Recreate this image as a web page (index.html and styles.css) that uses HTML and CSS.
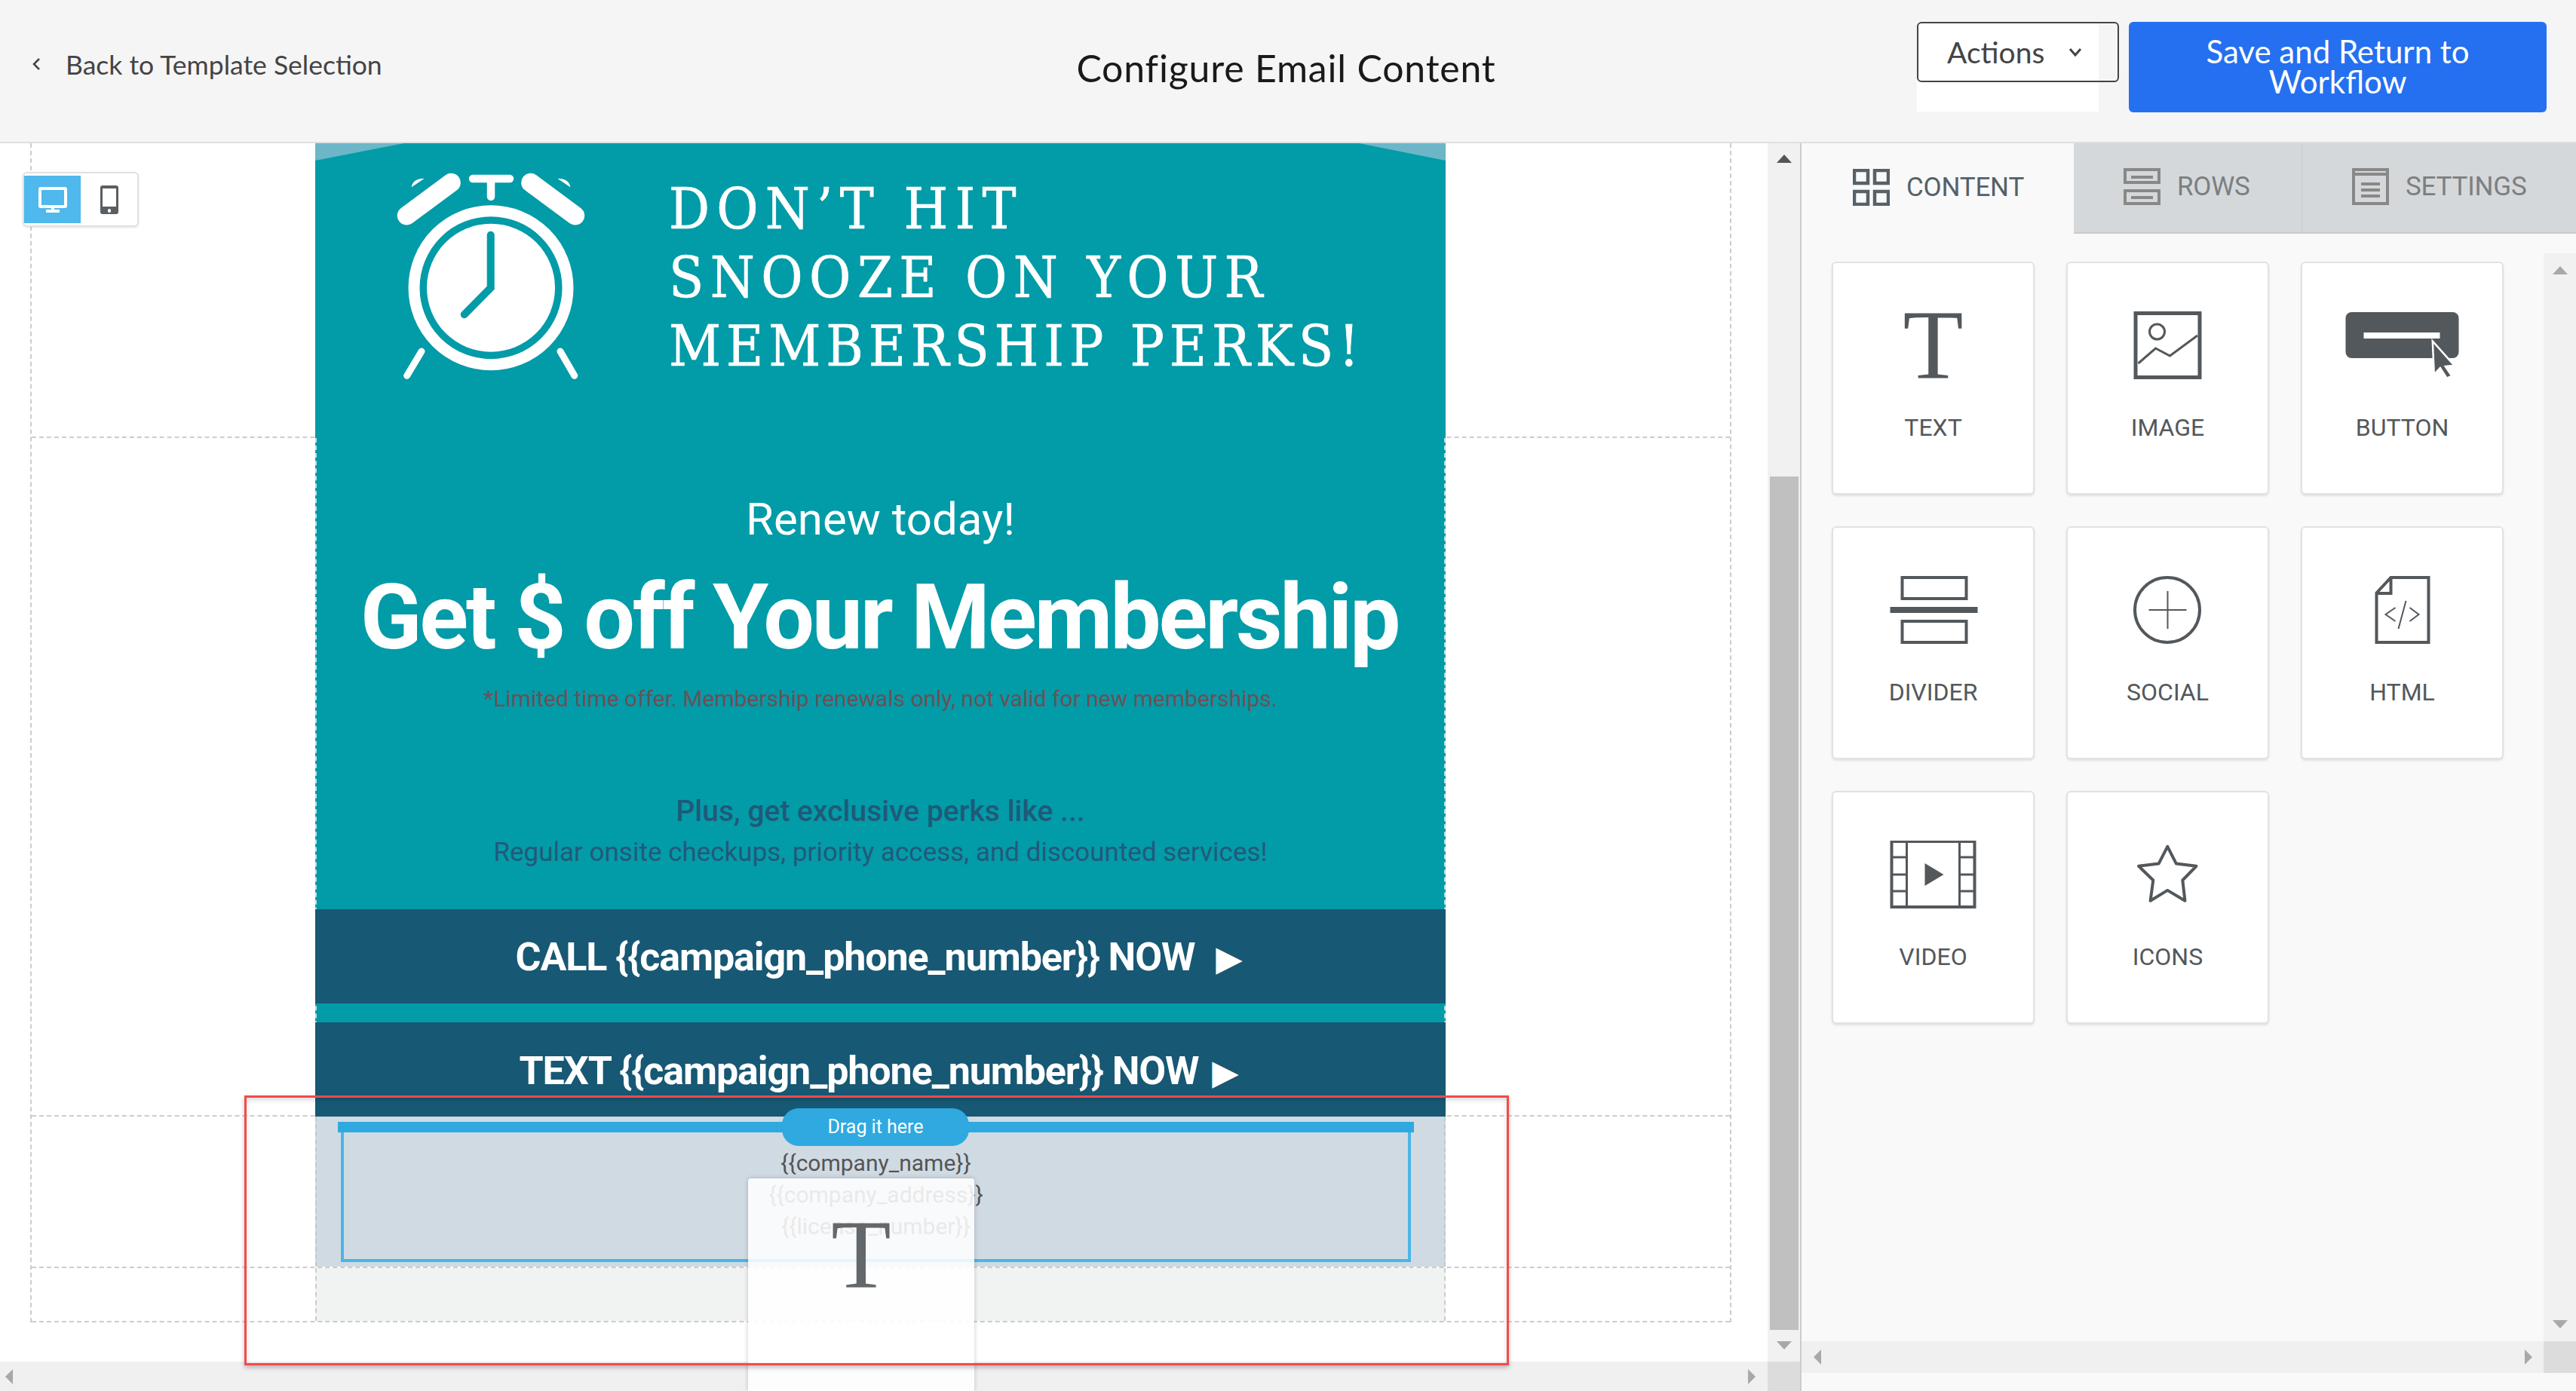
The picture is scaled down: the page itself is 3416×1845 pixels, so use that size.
FILE: index.html
```html
<!DOCTYPE html>
<html lang="en">
<head>
<meta charset="utf-8">
<title>Configure Email Content</title>
<link rel="stylesheet" href="styles.css">
</head>
<body>
<div class="app">
  <header class="topbar">
    <a class="back">
      <svg class="back-chevron" viewBox="0 0 12 18"><path d="M10 2 3 9l7 7"/></svg>
      <span>Back to Template Selection</span>
    </a>
    <h1 class="title">Configure Email Content</h1>
    <div class="top-actions">
      <div class="actions-menu">
        <button class="actions-btn"><span>Actions</span>
          <svg class="actions-chevron" viewBox="0 0 18 12"><path d="M2 2l7 8 7-8"/></svg>
        </button>
      </div>
      <button class="save-btn">Save and Return to<br>Workflow</button>
    </div>
  </header>

  <main class="main">
    <section class="canvas-col">
      <div class="canvas-body">
        <div class="stage">
          <div class="frame">
            <div class="row row-hero">
              <div class="email email-hero">
                <svg class="clock" viewBox="500 210 300 310">
                  <circle class="clock-ring" cx="651" cy="381.7" r="102"/>
                  <circle class="clock-face" cx="651" cy="381.7" r="85"/>
                  <path class="clock-hand" d="M650.7 311.7v70l-35 35.6"/>
                  <path class="clock-bell" d="M598.3 242.3 539.3 286M703.7 242.3 762.7 286"/>
                  <path class="clock-top" d="M627 237h49M651 240v20.7"/>
                  <path class="clock-cap" d="M545.7 248.3Q547 237 562.7 236.7ZM756.3 248.3Q755 237 739.3 236.7Z"/>
                  <path class="clock-leg" d="M559 466 539.7 498.3M743 466 761.7 498.3"/>
                </svg>
                <div class="headline">
                  <div class="headline-one">DON’T HIT</div>
                  <div class="headline-two">SNOOZE ON YOUR</div>
                  <div class="headline-three">MEMBERSHIP PERKS!</div>
                </div>
              </div>
            </div>

            <div class="row row-offer">
              <div class="email email-offer">
                <p class="renew">Renew today!</p>
                <p class="offer">Get $ off Your Membership</p>
                <p class="fine">*Limited time offer. Membership renewals only, not valid for new memberships.</p>
                <p class="perks">Plus, get exclusive perks like ...</p>
                <p class="perks-sub">Regular onsite checkups, priority access, and discounted services!</p>
                <div class="cta cta-call">CALL {{campaign_phone_number}} NOW <span class="cta-arrow cta-arrow-wide">▶</span></div>
                <div class="cta cta-text">TEXT {{campaign_phone_number}} NOW <span class="cta-arrow">▶</span></div>
              </div>
            </div>

            <div class="row row-footer">
              <div class="email email-footer">
                <p>{{company_name}}</p>
                <p>{{company_address}}</p>
                <p>{{license_number}}</p>
              </div>
            </div>

            <div class="row row-empty">
              <div class="email email-empty"></div>
            </div>
          </div>
        </div>
        <div class="vbar">
          <div class="vbar-top"><i class="arrow arrow-up arrow-dark"></i></div>
          <div class="vbar-thumb"></div>
          <div class="vbar-bottom"><i class="arrow arrow-down"></i></div>
        </div>
      </div>
      <div class="hbar">
        <div class="hbar-track"><i class="arrow arrow-left"></i><i class="arrow arrow-right"></i></div>
        <div class="hbar-corner"></div>
      </div>
    </section>

    <aside class="panel">
      <nav class="tabs">
        <div class="tab tab-active">
          <svg class="tab-icon" viewBox="0 0 49 49"><rect x="2" y="2" width="18" height="17"/><rect x="29" y="2" width="18" height="17"/><rect x="2" y="30" width="18" height="17"/><rect x="29" y="30" width="18" height="17"/></svg>
          <span>CONTENT</span>
        </div>
        <div class="tab tab-rows">
          <svg class="tab-icon" viewBox="0 0 49 49"><rect x="2" y="2" width="45" height="17"/><rect x="2" y="30" width="45" height="17"/><path d="M10 12h29M10 39h29"/></svg>
          <span>ROWS</span>
        </div>
        <div class="tab tab-settings">
          <svg class="tab-icon" viewBox="0 0 49 49"><rect x="2" y="2" width="45" height="45"/><path d="M2 8h45M12 21h25M12 29h25M12 37h25"/></svg>
          <span>SETTINGS</span>
        </div>
      </nav>
      <div class="panel-body">
        <div class="tiles">
          <div class="tile">
            <div class="tile-icon tile-t">T</div>
            <span class="tile-label">TEXT</span>
          </div>
          <div class="tile">
            <svg class="tile-icon" viewBox="0 0 160 90"><rect class="s5" x="37" y="2.500" width="85" height="85"/><circle class="s3" cx="65.500" cy="27" r="10"/><path class="s3" d="M40.500 69 63.500 49l19 10L119 32"/></svg>
            <span class="tile-label">IMAGE</span>
          </div>
          <div class="tile">
            <svg class="tile-icon" viewBox="0 0 160 90"><rect class="fill" x="4.500" y="1" width="150" height="61" rx="8"/><rect class="white" x="28.500" y="28" width="101" height="8"/><path class="cursor" d="M119.800 39.400 121.800 83.600 129.900 75 138.700 88.700 145.400 85.700 136.700 73 148.700 71.800Z"/></svg>
            <span class="tile-label">BUTTON</span>
          </div>
          <div class="tile">
            <svg class="tile-icon" viewBox="0 0 160 90"><rect class="s4" x="38.500" y="2" width="85" height="28"/><rect class="fill" x="22.500" y="41" width="116" height="8"/><rect class="s4" x="38.500" y="60" width="85" height="28"/></svg>
            <span class="tile-label">DIVIDER</span>
          </div>
          <div class="tile">
            <svg class="tile-icon" viewBox="0 0 160 90"><circle class="s4" cx="79" cy="45" r="43"/><path class="s2" d="M54.500 45h50M79.500 20v50"/></svg>
            <span class="tile-label">SOCIAL</span>
          </div>
          <div class="tile">
            <svg class="tile-icon" viewBox="0 0 160 90"><path class="s4" d="M64.500 2H114.500V88H45.500V22.500ZM64.500 2V23H45.500"/><path class="s2" d="M70.500 42 57.500 51l13 9M84.500 33 74.500 70M89.500 42l12 9-12 9"/></svg>
            <span class="tile-label">HTML</span>
          </div>
          <div class="tile">
            <svg class="tile-icon" viewBox="0 0 160 90"><rect class="s4" x="24.500" y="1" width="110" height="87"/><path class="s3" d="M44.500 1v87M114.500 1v87M24.500 22h20M24.500 45h20M24.500 67h20M114.500 22h20M114.500 45h20M114.500 67h20"/><path class="fill" d="M68.500 30 93.500 45 68.500 60Z"/></svg>
            <span class="tile-label">VIDEO</span>
          </div>
          <div class="tile">
            <svg class="tile-icon" viewBox="0 0 160 90"><path class="s4 round" d="M79.300 7.900 90.900 30.600 117.500 33.800 99.300 52.500 102.500 79.700 79.300 65.900 56.600 79.700 60.300 52.500 41 33.800 67.600 30.600Z"/></svg>
            <span class="tile-label">ICONS</span>
          </div>
        </div>
        <div class="vbar-inner"><i class="arrow arrow-up"></i><i class="arrow arrow-down"></i></div>
      </div>
      <div class="hbar-inner">
        <div class="hbar-inner-track"><i class="arrow arrow-left"></i><i class="arrow arrow-right"></i></div>
        <div class="hbar-inner-corner"></div>
      </div>
      <div class="panel-foot"></div>
    </aside>

    <div class="device-toggle">
      <div class="device device-on">
        <svg viewBox="0 0 38 34"><rect class="dev-s" x="2" y="2" width="34" height="24" rx="1"/><path class="dev-w" d="M19 27v3M10 32h18"/></svg>
      </div>
      <div class="device device-off">
        <svg viewBox="0 0 24 38"><rect class="dev-p" x="0" y="0" width="24" height="38" rx="3"/><rect class="dev-white" x="3" y="4" width="18" height="24"/><rect class="dev-white" x="10" y="31" width="4" height="5" rx="2"/></svg>
      </div>
    </div>

    <div class="drop-frame"></div>
    <div class="drop-bar"></div>
    <div class="drop-pill">Drag it here</div>
    <div class="ghost"><div class="ghost-t">T</div></div>
    <div class="drag-outline"></div>
  </main>
</div>
</body>
</html>
```
FILE: styles.css
```css
* { box-sizing: border-box; }
html, body { margin: 0; padding: 0; }
body { width: 3416px; height: 1845px; overflow: hidden; font-family: Roboto, "Liberation Sans", sans-serif; background: #fff; }
p, h1 { margin: 0; }
.app { display: flex; flex-direction: column; height: 1845px; }

/* top bar */
.topbar { flex: 0 0 190px; display: grid; grid-template-columns: 1fr auto 1fr; align-items: start; padding: 29px 39px 0 42px; background: #f5f5f5; border-bottom: 2px solid #dfdfdf; font-family: Lato, "Open Sans", sans-serif; }
.back { display: flex; align-items: center; gap: 33px; height: 58px; margin-top: 27px; color: #444; font-size: 35.500px; font-weight: 400; }
.back-chevron { width: 12px; height: 18px; fill: none; stroke: #444; stroke-width: 2.5; }
.title { margin: 32px 8px 0 0; font-size: 50px; line-height: 58px; font-weight: 400; letter-spacing: .8px; color: #1a1a1a; }
.top-actions { display: flex; justify-content: flex-end; }
.actions-menu { width: 241px; height: 119px; margin-right: 40px; background: #fff; }
.actions-btn { display: flex; align-items: center; width: 268px; height: 80px; padding: 0 0 0 38px; border: 2px solid #444; border-radius: 6px; background: transparent; color: #444; font: 400 39px/1 Lato, sans-serif; }
.actions-chevron { width: 18px; height: 12px; margin-left: 32px; fill: none; stroke: #444; stroke-width: 3; }
.save-btn { width: 554px; height: 120px; padding: 0 0 3px; border: 0; border-radius: 6px; background: #2470f0; color: #fff; font: 400 42px/40px Lato, sans-serif; }

/* layout */
.main { position: relative; flex: 1; display: flex; min-height: 0; }
.canvas-col { flex: 0 0 2387px; display: flex; flex-direction: column; }
.canvas-body { flex: 1; display: flex; min-height: 0; }
.stage { flex: 1; background: #fff; overflow: hidden; }
.frame { width: 2256px; margin-left: 40px; border-left: 2px dashed #ccc; border-right: 2px dashed #ccc; }
.row { border-bottom: 2px dashed #ccc; }
.email { width: 1499px; margin-left: 376px; }

/* email hero */
.row-hero { height: 391px; }
.email-hero { position: relative; height: 391px; display: flex; align-items: flex-start; background: #029ba8; }
.email-hero::before, .email-hero::after { content: ""; position: absolute; top: 0; height: 23px; background: #6cb6c8; }
.email-hero::before { left: 0; width: 118px; clip-path: polygon(0 0, 100% 0, 0 100%); }
.email-hero::after { right: 0; width: 115px; clip-path: polygon(0 0, 100% 0, 100% 100%); }
.clock { flex: none; width: 300px; height: 310px; margin: 20px 0 0 82px; }
.clock-ring { fill: none; stroke: #fff; stroke-width: 15; }
.clock-face { fill: #fff; }
.clock-hand { fill: none; stroke: #029ba8; stroke-width: 10; stroke-linecap: round; stroke-linejoin: miter; }
.clock-bell { fill: none; stroke: #fff; stroke-width: 25; stroke-linecap: round; }
.clock-top { fill: none; stroke: #fff; stroke-width: 10.500; stroke-linecap: round; }
.clock-cap { fill: #fff; }
.clock-leg { fill: none; stroke: #fff; stroke-width: 9; stroke-linecap: round; }
.headline { margin: 42px 0 0 87px; color: #fff; font-family: "DejaVu Serif", serif; font-size: 75px; line-height: 91px; font-stretch: condensed; white-space: nowrap; -webkit-text-stroke: .7px #fff; }
.headline-one { letter-spacing: 9.200px; }
.headline-two { letter-spacing: 8.500px; }
.headline-three { letter-spacing: 6.900px; }

/* email offer */
.row-offer { height: 900px; }
.email-offer { display: flex; flex-direction: column; height: 900px; padding-top: 73px; background: #029ba8; text-align: center; border-left: 2px dashed #b9dfe3; border-right: 2px dashed #b9dfe3; }
.renew { font-size: 60px; line-height: 70px; color: #fff; }
.offer { margin-top: 25px; padding-right: 3px; font-size: 120px; line-height: 140px; font-weight: 700; letter-spacing: -3.2px; color: #fff; white-space: nowrap; }
.fine { margin-top: 18px; font-size: 30px; line-height: 40px; color: #6c5156; }
.perks { margin-top: 104px; font-size: 39px; line-height: 50px; font-weight: 500; color: #1f5a78; }
.perks-sub { margin-top: 8px; font-size: 35px; line-height: 44px; color: #23597a; }
.cta { flex: none; height: 125px; margin: 0 -2px; padding-right: 5px; background: #175874; color: #fff; font-size: 52px; line-height: 127px; font-weight: 700; letter-spacing: -1.1px; text-align: center; white-space: nowrap; }
.cta-call { margin-top: 53px; }
.cta-text { margin-top: 25px; line-height: 129px; }
.cta-arrow { margin-left: 6px; font-family: "DejaVu Sans", sans-serif; font-size: 46px; }
.cta-arrow-wide { margin-left: 16px; }

/* email footer */
.row-footer { height: 201px; }
.email-footer { height: 199px; padding: 41px 12px 0 0; background: #d0dae3; border-left: 2px dashed #c2c9cf; border-right: 2px dashed #c2c9cf; color: #555; font-size: 30px; line-height: 42px; text-align: center; }
.row-empty { height: 72px; }
.email-empty { height: 70px; background: #f1f3f2; border-left: 2px dashed #ccc; border-right: 2px dashed #ccc; }

/* scrollbars */
.arrow { display: block; width: 0; height: 0; border-style: solid; border-color: transparent; }
.arrow-up { border-width: 0 10px 11px; border-bottom-color: #a8a8a8; }
.arrow-dark { border-bottom-color: #555; }
.arrow-down { border-width: 11px 10px 0; border-top-color: #a8a8a8; }
.arrow-left { border-width: 10px 10px 10px 0; border-right-color: #a8a8a8; }
.arrow-right { border-width: 10px 0 10px 10px; border-left-color: #a8a8a8; }
.vbar { flex: 0 0 43px; display: flex; flex-direction: column; align-items: center; background: #f1f1f1; }
.vbar-top { height: 442px; padding-top: 15px; }
.vbar-thumb { width: 38px; height: 1132px; background: #c0c0c0; }
.vbar-bottom { padding-top: 15px; }
.hbar { flex: 0 0 39px; display: flex; }
.hbar-track { flex: 1; display: flex; align-items: center; justify-content: space-between; padding: 0 16px 0 7px; background: #f0f0f0; }
.hbar-corner { flex: 0 0 43px; background: #dcdcdc; }

/* side panel */
.panel { flex: 1; display: flex; flex-direction: column; border-left: 2px solid #ccc; background: #f9f9f9; }
.tabs { flex: 0 0 120px; display: flex; }
.tab { display: flex; align-items: center; gap: 22px; padding: 0 0 4px 66px; background: #d5d8da; border-bottom: 2px solid #c8cbce; color: #7c7f81; font-size: 35px; letter-spacing: -.2px; }
.tab-active { flex: 0 0 361px; padding-left: 68px; background: #f9f9f9; border-bottom: 0; color: #53616a; }
.tab-rows { flex: 0 0 303px; border-right: 1px solid #c8cbce; }
.tab-settings { flex: 1; }
.tab-icon { width: 49px; height: 49px; fill: none; stroke: #888; stroke-width: 4; }
.tab-active .tab-icon { stroke: #566168; stroke-width: 4.500; }
.panel-body { flex: 1; display: flex; min-height: 0; padding-top: 26px; }
.tiles { flex: 1; display: grid; grid-template-columns: repeat(3, 269px); grid-auto-rows: 309px; gap: 42px; align-content: start; padding: 11px 0 0 40px; }
.tile { display: flex; flex-direction: column; align-items: center; padding-top: 64px; background: #fff; border: 2px solid #e2e2e2; border-radius: 6px; box-shadow: 0 2px 3px rgba(0,0,0,.1); }
.tile-icon { width: 160px; height: 90px; flex: none; }
.tile-t { font-family: "Liberation Serif", serif; font-size: 131px; line-height: 90px; text-align: center; color: #53585c; }
.tile-label { margin-top: 44px; font-size: 32px; line-height: 40px; color: #53585c; }
.s2, .s3, .s4, .s5 { fill: none; stroke: #53585c; }
.s2 { stroke-width: 2; }
.s3 { stroke-width: 3; }
.s4 { stroke-width: 4; }
.s5 { stroke-width: 5; }
.round { stroke-linejoin: round; }
.fill { fill: #53585c; }
.white { fill: #fff; }
.cursor { fill: #53585c; stroke: #fff; stroke-width: 2.500; }
.vbar-inner { flex: 0 0 43px; display: flex; flex-direction: column; align-items: center; justify-content: space-between; padding: 17px 0 17px; background: #f1f1f1; }
.hbar-inner { flex: 0 0 42px; display: flex; }
.hbar-inner-track { flex: 1; display: flex; align-items: center; justify-content: space-between; padding: 0 15px 0 16px; background: #f0f0f0; }
.hbar-inner-corner { flex: 0 0 43px; background: #dcdcdc; }
.panel-foot { flex: 0 0 24px; }

/* overlays */
.device-toggle { position: absolute; left: 30px; top: 38px; display: flex; width: 154px; height: 73px; padding: 3px 0; background: #fff; border: 2px solid #e0e0e6; border-radius: 6px; box-shadow: 0 1px 3px rgba(0,0,0,.1); }
.device { flex: 1; display: flex; align-items: center; justify-content: center; }
.device-on { flex: 0 0 75px; background: #4fb8ec; }
.device-on svg { width: 38px; height: 34px; }
.device-off svg { width: 24px; height: 38px; }
.dev-s { fill: none; stroke: #fff; stroke-width: 4; }
.dev-w { fill: none; stroke: #fff; stroke-width: 4; }
.dev-p { fill: #5a5f63; }
.dev-white { fill: #fff; }
.drop-frame { position: absolute; left: 452px; top: 1312px; width: 1419px; height: 172px; border: 4px solid #4ab5e8; border-top: 0; }
.drop-bar { position: absolute; left: 448px; top: 1298px; width: 1427px; height: 14px; background: #2fa9e0; }
.drop-pill { position: absolute; left: 1037px; top: 1280px; width: 248px; height: 50px; border-radius: 22px; background: #2fa9e0; color: #fff; font-size: 25px; line-height: 50px; text-align: center; }
.ghost { position: absolute; left: 992px; top: 1373px; width: 300px; height: 282px; padding-top: 55px; background: rgba(255,255,255,.87); border-radius: 4px 4px 0 0; box-shadow: 0 0 6px rgba(0,0,0,.2); }
.ghost-t { font-family: "Liberation Serif", serif; font-size: 130px; line-height: 90px; text-align: center; color: #62686b; }
.drag-outline { position: absolute; left: 324px; top: 1263px; width: 1677px; height: 358px; border: 3px solid #f44a4a; box-shadow: 0 3px 6px rgba(0,0,0,.25), inset 0 3px 6px rgba(0,0,0,.15); }
```
